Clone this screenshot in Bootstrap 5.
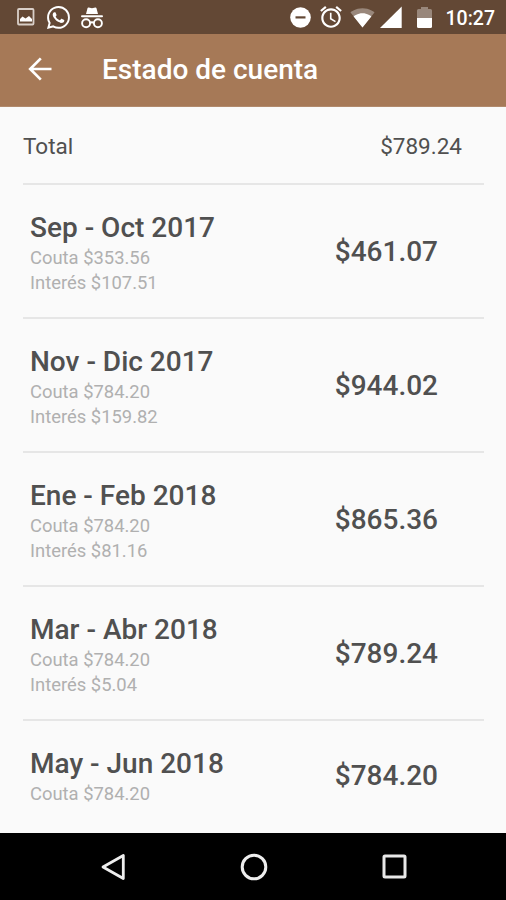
<!DOCTYPE html>
<html lang="es">
<head>
<meta charset="utf-8">
<meta name="viewport" content="width=device-width, initial-scale=1">
<title>Estado de cuenta</title>
<link href="https://cdn.jsdelivr.net/npm/bootstrap@5.3.0/dist/css/bootstrap.min.css" rel="stylesheet">
<style>
body{font-family:Roboto,sans-serif;background:#fafafa;color:#505050;height:900px;overflow:hidden}
svg{display:block;flex:none}
.status-bar{height:34px;background:#634835;color:#fff;padding:0 11px 0 17px}
.icon-chat{margin-left:12px}
.icon-incognito{margin-left:10px}
.icon-alarm{margin-left:7px}
.icon-wifi{margin-left:6px}
.icon-signal{margin-left:5px}
.icon-battery{margin-left:15px}
.clock{font-size:19.5px;font-weight:500;line-height:32px;margin-left:14px;padding-top:3px}
.app-bar{height:73px;background:#a67957;color:#fff;padding:0 0 2px 28px;border-bottom:1px solid #b18a6d}
.app-title{font-size:28px;font-weight:500;line-height:68px;margin:0 0 0 50px;padding-top:2px}
.statement{padding:0 22px 0 23px}
.total-row{height:78px;padding:3px 22px 0 0;font-size:22.5px;border-bottom:2px solid #e6e6e6}
.period{height:134px;padding:26px 46px 22px 7px;border-bottom:2px solid #e6e6e6}
.period:last-child{border-bottom:0;height:85px;padding-bottom:0}
.period-name{font-size:28px;line-height:34px;font-weight:500;margin:0}
.detail{font-size:18.4px;line-height:25px;color:#b0b0b0;margin:0}
.amount{font-size:28px;line-height:34px;font-weight:500;padding-bottom:2px}
.nav-keys{height:67px;background:#000;padding:0 99px 0 101px}
.home-key{margin-right:2px}
</style>
</head>
<body class="d-flex flex-column">
<header>
<div class="status-bar d-flex align-items-center">
<svg width="18" height="18" viewBox="0 0 18 18"><rect x="1" y="1" width="15.500" height="15.500" rx="1" fill="none" stroke="#d9cfc8" stroke-width="1.800"/><path d="M3 13.500V11l2.500-2.500L8.500 10.500 12 8l3 3v2.500z" fill="#fff"/></svg>
<svg class="icon-chat" width="23" height="23" viewBox="0 0 16 16" fill="#fff"><path d="M13.601 2.326A7.854 7.854 0 0 0 7.994 0C3.627 0 .068 3.558.064 7.926c0 1.399.366 2.760 1.057 3.965L0 16l4.204-1.102a7.933 7.933 0 0 0 3.790.965h.004c4.368 0 7.926-3.558 7.930-7.930A7.898 7.898 0 0 0 13.600 2.326zM7.994 14.521a6.573 6.573 0 0 1-3.356-.92l-.240-.144-2.494.654.666-2.433-.156-.251a6.560 6.560 0 0 1-1.007-3.505c0-3.626 2.957-6.584 6.591-6.584a6.560 6.560 0 0 1 4.660 1.931 6.557 6.557 0 0 1 1.928 4.660c-.004 3.639-2.961 6.592-6.592 6.592zm3.615-4.934c-.197-.099-1.170-.578-1.353-.646-.182-.065-.315-.099-.445.099-.133.197-.513.646-.627.775-.114.133-.232.148-.430.050-.197-.100-.836-.308-1.592-.985-.590-.525-.985-1.175-1.103-1.372-.114-.198-.011-.304.088-.403.087-.088.197-.232.296-.346.100-.114.133-.198.198-.330.065-.134.034-.248-.015-.347-.050-.099-.445-1.076-.612-1.470-.160-.389-.323-.335-.445-.340-.114-.007-.247-.007-.380-.007a.729.729 0 0 0-.529.247c-.182.198-.691.677-.691 1.654 0 .977.710 1.916.810 2.049.098.133 1.394 2.132 3.383 2.992.470.205.840.326 1.129.418.475.152.904.129 1.246.080.380-.058 1.171-.480 1.338-.943.164-.464.164-.860.114-.943-.049-.084-.182-.133-.380-.232z"/></svg>
<svg class="icon-incognito" width="24" height="23" viewBox="0 0 23 23" fill="#fff"><path d="M5.500 8 7 2.200Q7.300 1.300 8.300 1.500L11.500 2.200 14.700 1.500Q15.700 1.300 16 2.200L17.500 8z"/><rect x=".5" y="9.300" width="22" height="2" rx="1"/><g fill="none" stroke="#fff" stroke-width="1.900"><circle cx="5.600" cy="17.200" r="4"/><circle cx="17.400" cy="17.200" r="4"/><path d="M9.500 17q2-1.500 4 0"/></g></svg>
<div class="d-flex align-items-center ms-auto">
<svg width="21" height="21" viewBox="0 0 21 21"><circle cx="10.500" cy="10.500" r="10.300" fill="#fff"/><rect x="5.500" y="9.300" width="10" height="2.200" fill="#634835"/></svg>
<svg class="icon-alarm" width="26" height="26" viewBox="0 0 24 24" fill="#fff"><path d="M22 5.720l-4.600-3.860-1.290 1.530 4.600 3.860L22 5.720zM7.880 3.390L6.600 1.860 2 5.710l1.290 1.530 4.590-3.850zM12.500 8H11v6l4.750 2.850.750-1.230-4-2.370V8zM12 4c-4.970 0-9 4.030-9 9s4.020 9 9 9c4.970 0 9-4.030 9-9s-4.030-9-9-9zm0 16c-3.870 0-7-3.130-7-7s3.130-7 7-7 7 3.130 7 7-3.130 7-7 7z"/></svg>
<svg class="icon-wifi" width="25" height="25" viewBox="0 0 24 24" fill="#fff"><path fill-opacity=".35" d="M12.010 21.490L23.640 7c-.450-.340-4.930-4-11.640-4C5.280 3 .810 6.660.360 7l11.630 14.490z"/><path d="M3.530 10.950l8.460 10.540 8.480-10.550C20.040 10.620 16.810 8 12 8c-4.810 0-8.040 2.620-8.470 2.950z"/></svg>
<svg class="icon-signal" width="22" height="22" viewBox="0 0 22 22"><path d="M0 22 21.700.5V22z" fill="#fff"/></svg>
<svg class="icon-battery" width="15" height="22" viewBox="0 0 15 22"><path d="M0 12V4.500Q0 3 1.500 3H4V1h7v2h2.500Q15 3 15 4.500V12z" fill="#fff" fill-opacity=".35"/><path d="M0 12h15v8.500q0 1.500-1.500 1.500h-12Q0 22 0 20.500z" fill="#fff"/></svg>
<span class="clock">10:27</span>
</div>
</div>
<div class="app-bar d-flex align-items-center">
<svg width="24" height="24" viewBox="0 0 24 24" fill="none" stroke="#fff" stroke-width="2.700"><path d="M23.500 12H2.500M12.800 1.400 2.200 12l10.600 10.600"/></svg>
<h1 class="app-title">Estado de cuenta</h1>
</div>
</header>
<main class="statement flex-grow-1 overflow-hidden">
<div class="total-row d-flex justify-content-between align-items-center"><span>Total</span><span>$789.24</span></div>
<section class="period d-flex justify-content-between align-items-center"><div><h2 class="period-name">Sep - Oct 2017</h2><p class="detail">Couta $353.56</p><p class="detail">Interés $107.51</p></div><span class="amount">$461.07</span></section>
<section class="period d-flex justify-content-between align-items-center"><div><h2 class="period-name">Nov - Dic 2017</h2><p class="detail">Couta $784.20</p><p class="detail">Interés $159.82</p></div><span class="amount">$944.02</span></section>
<section class="period d-flex justify-content-between align-items-center"><div><h2 class="period-name">Ene - Feb 2018</h2><p class="detail">Couta $784.20</p><p class="detail">Interés $81.16</p></div><span class="amount">$865.36</span></section>
<section class="period d-flex justify-content-between align-items-center"><div><h2 class="period-name">Mar - Abr 2018</h2><p class="detail">Couta $784.20</p><p class="detail">Interés $5.04</p></div><span class="amount">$789.24</span></section>
<section class="period d-flex justify-content-between align-items-center"><div><h2 class="period-name">May - Jun 2018</h2><p class="detail">Couta $784.20</p></div><span class="amount">$784.20</span></section>
</main>
<footer class="nav-keys d-flex justify-content-between align-items-center">
<svg width="26" height="28" viewBox="0 0 26 28" fill="none" stroke="#eee" stroke-width="2.800" stroke-linejoin="round"><path d="M22.300 2.500v23L2 14z"/></svg>
<svg class="home-key" width="28" height="28" viewBox="0 0 28 28" fill="none" stroke="#eee" stroke-width="3"><circle cx="14" cy="14" r="11.800"/></svg>
<svg width="25" height="25" viewBox="0 0 25 25" fill="none" stroke="#e8e8e8" stroke-width="3"><rect x="2" y="2" width="21" height="21" rx="1"/></svg>
</footer>
<script src="https://cdn.jsdelivr.net/npm/bootstrap@5.3.0/dist/js/bootstrap.bundle.min.js"></script>
</body>
</html>
